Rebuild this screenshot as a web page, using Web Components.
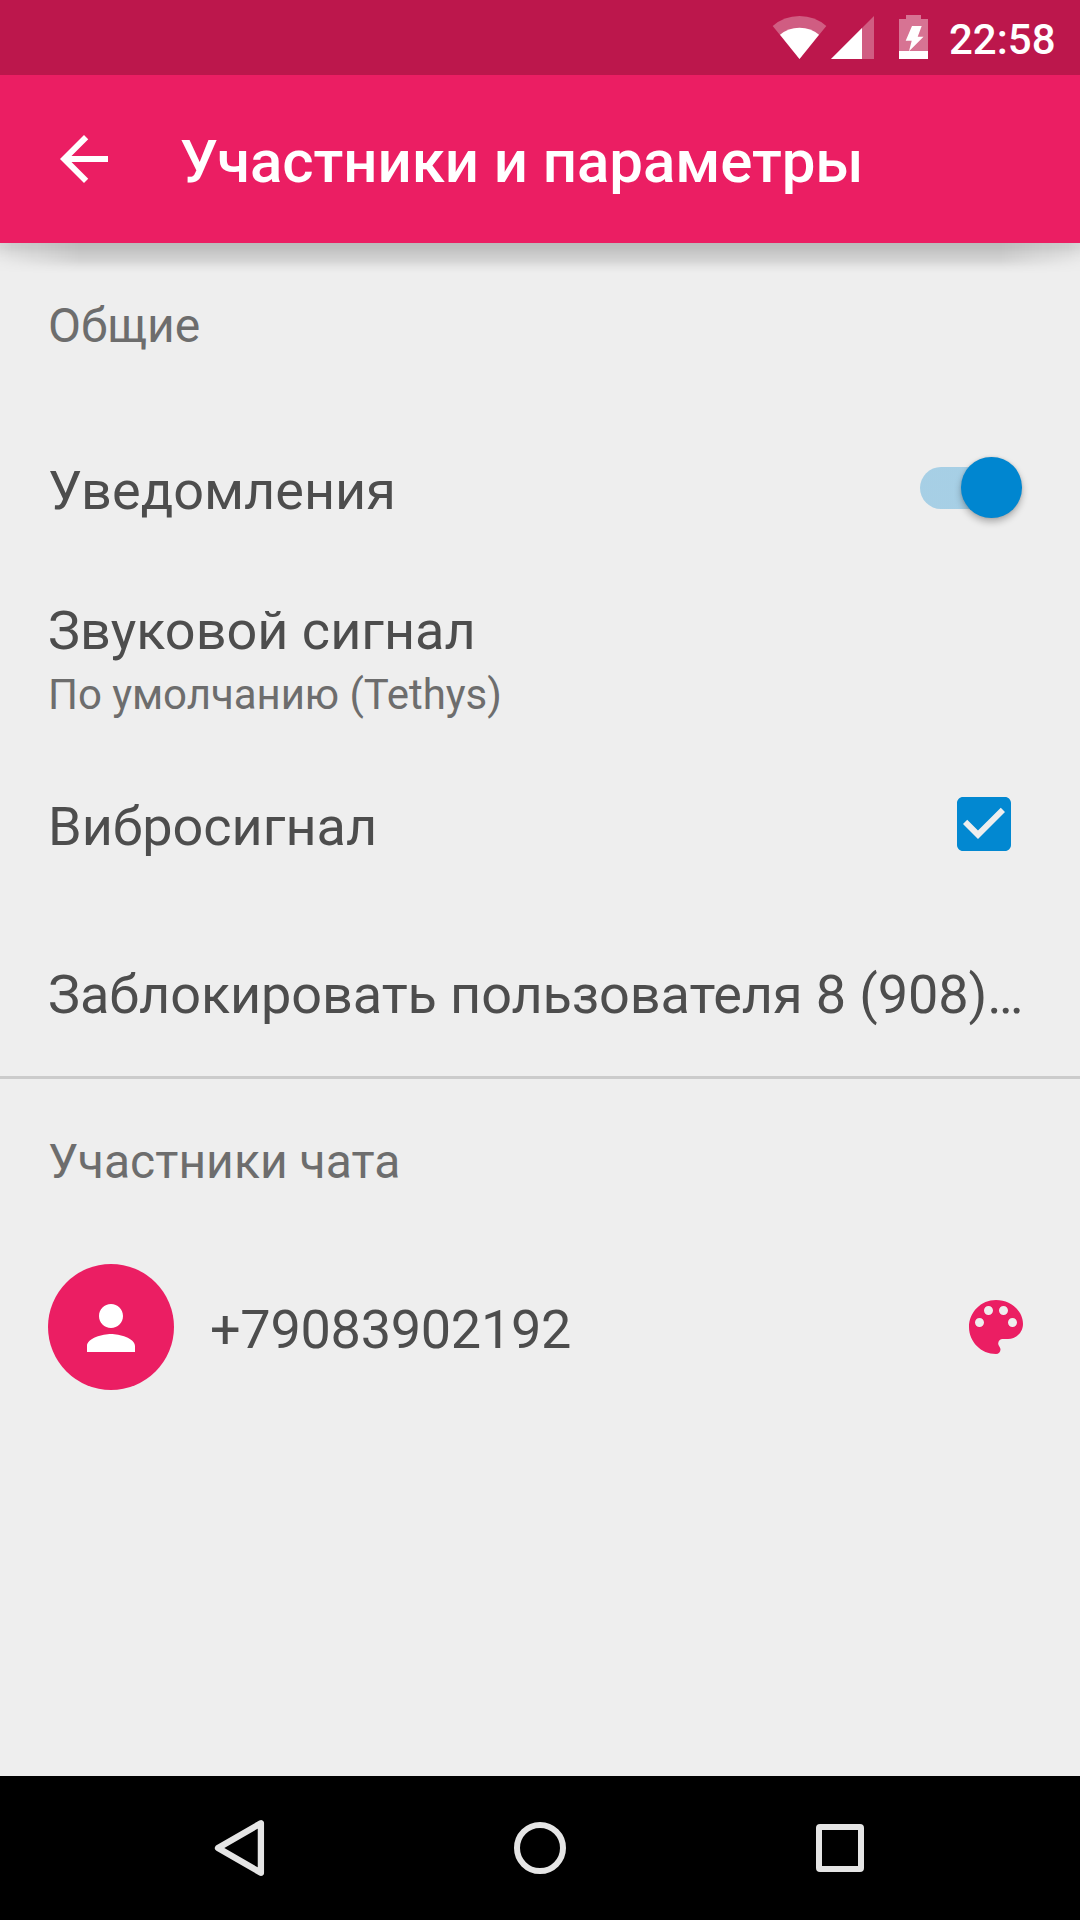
<!DOCTYPE html>
<html lang="ru">
<head>
<meta charset="utf-8">
<title>Участники и параметры</title>
<style>
  html, body { margin: 0; height: 100%; background: #eee; }
  body { font-family: Roboto, "Noto Sans", sans-serif; color: #4d4d4d; }
</style>
</head>
<body>
<chat-settings-screen></chat-settings-screen>
<script>
const define = (name, html) => {
  const template = document.createElement('template');
  template.innerHTML = html;
  customElements.define(name, class extends HTMLElement {
    constructor() {
      super();
      this.attachShadow({ mode: 'open' }).append(template.content.cloneNode(true));
    }
  });
};

define('status-bar', `
  <style>
    :host { display: flex; flex: none; height: 75px; box-sizing: border-box; padding-right: 24px; background: #bc174c; color: #fff; justify-content: flex-end; }
    svg { display: block; width: 181px; height: 75px; flex: none; }
    .clock { font-size: 42px; font-weight: 500; line-height: 75px; padding-top: 2px; width: 107px; white-space: nowrap; }
  </style>
  <svg viewBox="768 0 181 75" fill="#fff">
    <path opacity=".3" d="M772.7 26Q784 16 799.5 16T826.3 26L799.5 59Z"/>
    <path d="M780 34.8Q788 27.7 799.5 27.7T819 34.8L799.5 59Z"/>
    <path opacity=".3" d="M831 59L874 16V59Z"/>
    <path d="M831 59L862 28V59Z"/>
    <path opacity=".4" d="M906 15H921V19H928V51H899V19H906Z"/>
    <path d="M899 51H928V59H899Z"/>
    <path d="M912 26H921.7L917.7 36.7H923.5L909 51.2L911.7 40.7H905.7Z"/>
  </svg>
  <div class="clock">22:58</div>`);

define('app-toolbar', `
  <style>
    :host { display: flex; flex: none; position: relative; height: 168px; align-items: center; box-sizing: border-box; padding-left: 48px; background: #eb1e63; color: #fff; z-index: 1; }
    svg { width: 72px; height: 72px; display: block; }
    h1 { margin: 0 0 0 60px; padding-top: 5px; font-size: 60px; line-height: 72px; font-weight: 500; letter-spacing: -.07px; white-space: nowrap; }
    .spot, .ambient { position: absolute; left: 0; right: 0; top: 100%; pointer-events: none; }
    .spot { height: 30px; background: linear-gradient(rgba(0,0,0,.11) 0, rgba(0,0,0,.11) 14px, rgba(0,0,0,.095) 19px, rgba(0,0,0,.035) 24px, transparent 30px);
      mask-image: linear-gradient(90deg, rgba(0,0,0,.15), #000 80px, #000 calc(100% - 80px), rgba(0,0,0,.15)); }
    .ambient { height: 20px; background: linear-gradient(rgba(0,0,0,.11), rgba(0,0,0,.09) 5px, rgba(0,0,0,.04) 11px, rgba(0,0,0,.01) 15px, transparent);
      mask-image: linear-gradient(90deg, rgba(0,0,0,.75), #000 12px, #000 calc(100% - 12px), rgba(0,0,0,.75)); }
  </style>
  <svg viewBox="0 0 24 24" fill="#fff"><path d="M20 11H7.83l5.59-5.59L12 4l-8 8 8 8 1.41-1.41L7.83 13H20z"/></svg>
  <h1><slot></slot></h1>
  <div class="spot"></div><div class="ambient"></div>`);

define('section-title', `
  <style>
    :host { display: flex; align-items: center; height: 165px; padding-left: 48px; font-size: 48px; line-height: 57px; letter-spacing: .06px; color: #6d6d6d; }
  </style>
  <slot></slot>`);

define('setting-row', `
  <style>
    :host { display: flex; align-items: center; box-sizing: border-box; height: var(--row-height, 160px); padding: 0 48px; gap: 36px; }
    .texts { flex: 1; min-width: 0; padding-top: var(--text-shift, 5px); }
    .label { font-size: 54px; line-height: 64px; white-space: nowrap; }
    ::slotted([slot=note]) { display: block; font-size: 42px; line-height: 64px; letter-spacing: -.05px; color: #6d6d6d; }
  </style>
  <slot name="start"></slot>
  <div class="texts"><div class="label"><slot></slot></div><slot name="note"></slot></div>
  <slot name="end"></slot>`);

define('toggle-switch', `
  <style>
    :host { display: flex; flex: none; align-items: center; width: 102px; height: 61px; margin-right: 10px; }
    .track { display: flex; align-items: center; justify-content: flex-end; width: 100%; height: 42px; border-radius: 21px; background: linear-gradient(90deg, rgba(2,136,209,.3) 72px, transparent 72px); }
    .thumb { width: 60.5px; height: 60.5px; flex: none; margin: 0 .3px 1px 0; border-radius: 50%; background: #0086d0; box-shadow: 0 4px 7px rgba(0,0,0,.27), 0 0 3px rgba(0,0,0,.12); }
  </style>
  <div class="track"><div class="thumb"></div></div>`);

define('check-box', `
  <style>
    :host { display: block; flex: none; margin-right: 12px; }
    svg { display: block; width: 72px; height: 72px; }
  </style>
  <svg viewBox="0 0 24 24" fill="#0288d1"><path d="M19 3H5c-1.11 0-2 .9-2 2v14c0 1.100.89 2 2 2h14c1.110 0 2-.9 2-2V5c0-1.100-.89-2-2-2zm-9 14l-5-5 1.410-1.410L10 14.170l7.590-7.590L19 8l-9 9z"/></svg>`);

define('member-avatar', `
  <style>
    :host { display: flex; flex: none; align-items: center; justify-content: center; width: 126px; height: 126px; box-sizing: border-box; padding-top: 2px; border-radius: 50%; background: #eb1e63; }
    svg { display: block; width: 72px; height: 72px; }
  </style>
  <svg viewBox="0 0 24 24" fill="#fff"><path d="M12 12c2.21 0 4-1.79 4-4s-1.790-4-4-4-4 1.790-4 4 1.790 4 4 4zm0 2c-2.670 0-8 1.340-8 4v2h16v-2c0-2.660-5.330-4-8-4z"/></svg>`);

define('palette-button', `
  <style>
    :host { display: block; flex: none; }
    svg { display: block; width: 72px; height: 72px; }
  </style>
  <svg viewBox="0 0 24 24" fill="#eb1e63"><path d="M12 3c-4.970 0-9 4.030-9 9s4.030 9 9 9c.83 0 1.500-.67 1.500-1.500 0-.39-.15-.74-.39-1.010-.23-.26-.38-.61-.38-.99 0-.83.67-1.500 1.500-1.500H16c2.760 0 5-2.240 5-5 0-4.420-4.030-8-9-8zm-5.500 9c-.83 0-1.500-.67-1.500-1.500S5.670 9 6.500 9 8 9.670 8 10.500 7.330 12 6.500 12zm3-4C8.670 8 8 7.330 8 6.500S8.670 5 9.500 5s1.500.67 1.500 1.500S10.330 8 9.500 8zm5 0c-.83 0-1.500-.67-1.500-1.500S13.670 5 14.500 5s1.500.67 1.500 1.500S15.330 8 14.500 8zm3 4c-.83 0-1.500-.67-1.500-1.500S16.670 9 17.500 9s1.500.67 1.500 1.500-.67 1.500-1.500 1.500z"/></svg>`);

define('nav-bar', `
  <style>
    :host { display: flex; flex: none; height: 144px; box-sizing: border-box; padding: 0 90px; background: #000; align-items: center; }
    svg { display: block; flex: 1; width: 300px; height: 72px; fill: none; stroke: #e5e5e5; stroke-width: 6; }
  </style>
  <svg viewBox="90 1812 300 72"><path stroke-linejoin="round" stroke-width="6.3" d="M218 1848L260.900 1823.200V1872.800Z"/></svg>
  <svg viewBox="390 1812 300 72"><circle cx="540" cy="1848" r="23"/></svg>
  <svg viewBox="690 1812 300 72"><path fill="#e5e5e5" stroke="none" fill-rule="evenodd" d="M820 1824H860Q864 1824 864 1828V1868Q864 1872 860 1872H820Q816 1872 816 1868V1828Q816 1824 820 1824ZM822 1830V1866H858V1830Z"/></svg>`);

define('chat-settings-screen', `
  <style>
    :host { display: flex; flex-direction: column; width: 1080px; height: 1920px; overflow: hidden; background: #eee; }
    main { flex: 1; }
    hr { margin: 0; border: 0; height: 3px; background: #cbcbcb; }
    .sound { --row-height: 174px; --text-shift: 15px; align-items: flex-start; padding-top: 16px; }
    .vibro { --row-height: 164px; }
    .block { --row-height: 170px; --text-shift: 7px; letter-spacing: -.09px; }
    .member { --row-height: 166px; letter-spacing: -.28px; }
  </style>
  <status-bar></status-bar>
  <app-toolbar>Участники и параметры</app-toolbar>
  <main>
    <section-title>Общие</section-title>
    <setting-row>Уведомления<toggle-switch slot="end"></toggle-switch></setting-row>
    <setting-row class="sound">Звуковой сигнал<span slot="note">По умолчанию (Tethys)</span></setting-row>
    <setting-row class="vibro">Вибросигнал<check-box slot="end"></check-box></setting-row>
    <setting-row class="block">Заблокировать пользователя 8 (908)…</setting-row>
    <hr>
    <section-title>Участники чата</section-title>
    <setting-row class="member"><member-avatar slot="start"></member-avatar>+79083902192<palette-button slot="end"></palette-button></setting-row>
  </main>
  <nav-bar></nav-bar>`);
</script>
</body>
</html>
